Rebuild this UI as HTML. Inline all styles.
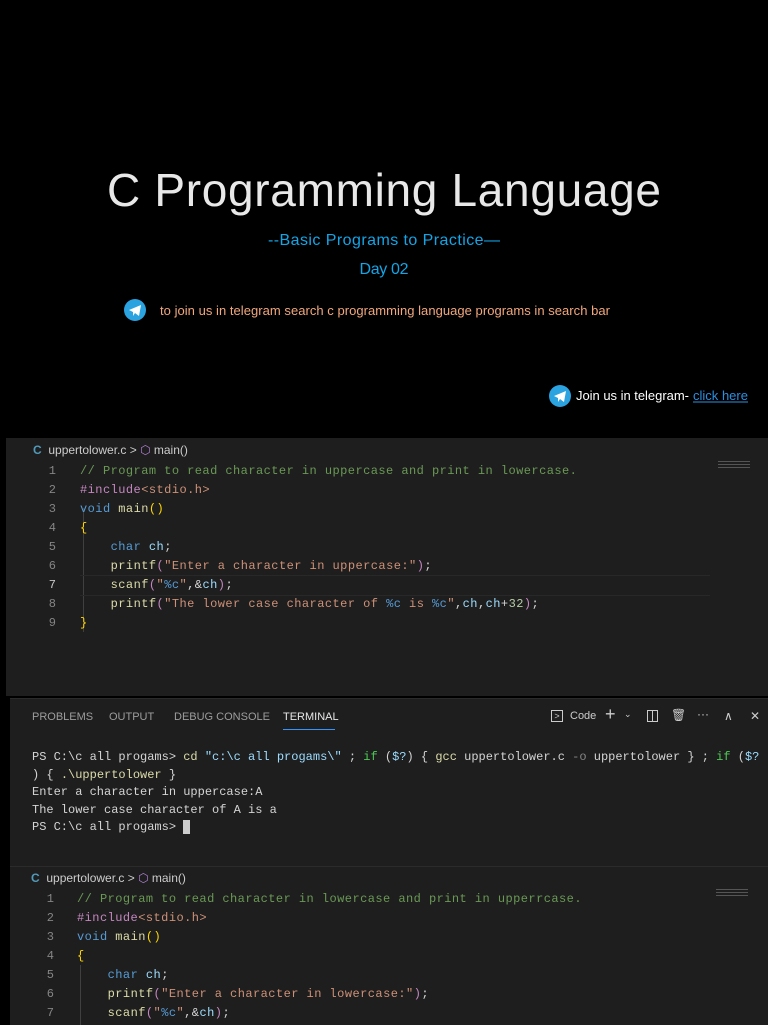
<!DOCTYPE html>
<html><head><meta charset="utf-8"><style>
body{margin:0;width:768px;height:1024px;background:#000;overflow:hidden;position:relative;font-family:"Liberation Sans",sans-serif}
.p{position:absolute;background:#1e1e1e}
.m{font-family:"Liberation Mono",monospace;font-size:12px;white-space:pre;position:absolute;color:#d4d4d4;letter-spacing:0.45px}
.n{color:#858585}
.c{color:#6a9955}.k{color:#569cd6}.f{color:#dcdcaa}.s{color:#ce9178}.v{color:#9cdcfe}.i{color:#c586c0}.y{color:#ffd700}.nu{color:#b5cea8}
.bc{position:absolute;font-size:12px;color:#ccc}
.ic{position:absolute;top:708px;color:#ccc;font-size:12px}
</style></head><body>
<svg width="768" height="430" style="position:absolute;left:0;top:0">
<text x="384" y="206" text-anchor="middle" fill="#e8e8e8" font-size="46" textLength="554" font-family="Liberation Sans">C Programming Language</text>
<text x="384" y="245" text-anchor="middle" fill="#12a6e8" font-size="16" textLength="232">--Basic Programs to Practice—</text>
<text x="384" y="274" text-anchor="middle" fill="#12a6e8" font-size="16" textLength="49">Day 02</text>
<circle cx="135" cy="310" r="11" fill="#2aa3e0"/>
<path d="M129 310 L141 305 L139 316 L135 313 L133 316 L133 312 Z" fill="#fff"/>
<text x="160" y="315" fill="#f2a77c" font-size="13" textLength="450">to join us in telegram search c programming language programs in search bar</text>
<circle cx="560" cy="396" r="11" fill="#2aa3e0"/>
<path d="M554 396 L566 391 L564 402 L560 399 L558 402 L558 398 Z" fill="#fff"/>
<text x="576" y="400" fill="#fff" font-size="13" textLength="113">Join us in telegram-</text>
<text x="693" y="400" fill="#2d8fe0" font-size="13" textLength="55">click here</text>
<line x1="693" y1="402" x2="748" y2="402" stroke="#2d8fe0"/>
</svg>

<div class="p" style="left:6px;top:438px;width:762px;height:258px"></div>
<div class="bc" style="left:33px;top:443px"><b style="color:#519aba">C</b>&nbsp; uppertolower.c &gt; <span style="color:#b180d7">⬡</span> main()</div>
<div style="position:absolute;left:83px;top:508px;width:1px;height:124px;background:#404040"></div>
<div style="position:absolute;left:80px;top:575px;width:630px;height:19px;border-top:1px solid #282828;border-bottom:1px solid #282828"></div>
<div class="m n" style="left:42px;top:462px;line-height:19px;text-align:right;width:14px;letter-spacing:0">1
2
3
4
5
6
<span style="color:#c6c6c6">7</span>
8
9</div>
<div class="m" style="left:80px;top:462px;line-height:19px"><span class="c">// Program to read character in uppercase and print in lowercase.</span>
<span class="i">#include</span><span class="s">&lt;stdio.h&gt;</span>
<span class="k">void</span> <span class="f">main</span><span class="y">()</span>
<span class="y">{</span>
    <span class="k">char</span> <span class="v">ch</span>;
    <span class="f">printf</span><span class="i">(</span><span class="s">"Enter a character in uppercase:"</span><span class="i">)</span>;
    <span class="f">scanf</span><span class="i">(</span><span class="s">"</span><span class="k">%c</span><span class="s">"</span>,&amp;<span class="v">ch</span><span class="i">)</span>;
    <span class="f">printf</span><span class="i">(</span><span class="s">"The lower case character of </span><span class="k">%c</span><span class="s"> is </span><span class="k">%c</span><span class="s">"</span>,<span class="v">ch</span>,<span class="v">ch</span>+<span class="nu">32</span><span class="i">)</span>;
<span class="y">}</span></div>
<div style="position:absolute;left:718px;top:461px;width:32px;height:8px;background:repeating-linear-gradient(#555 0 1px,transparent 1px 3px)"></div>

<div class="p" style="left:10px;top:698px;width:758px;height:167px;border-top:1px solid #2b2b2b"></div>
<div class="bc" style="left:32px;top:711px;font-size:11px;color:#9d9d9d">PROBLEMS</div>
<div class="bc" style="left:109px;top:711px;font-size:11px;color:#9d9d9d">OUTPUT</div>
<div class="bc" style="left:174px;top:711px;font-size:11px;color:#9d9d9d">DEBUG CONSOLE</div>
<div class="bc" style="left:283px;top:711px;font-size:11px;color:#e7e7e7">TERMINAL</div>
<div style="position:absolute;left:283px;top:729px;width:52px;height:1px;background:#3794ff"></div>
<div style="position:absolute;left:551px;top:710px;width:12px;height:12px;border:1px solid #ccc;box-sizing:border-box;font-size:9px;color:#ccc;text-align:center;line-height:10px">&gt;</div>
<div class="ic" style="left:570px;top:710px;font-size:11px">Code</div>
<div class="ic" style="left:605px;top:704px;font-size:18px">+</div>
<div class="ic" style="left:624px;top:709px;font-size:9px">⌄</div>
<div style="position:absolute;left:647px;top:710px;width:11px;height:12px;border:1px solid #ccc;box-sizing:border-box"><div style="margin-left:4px;width:1px;height:10px;background:#ccc"></div></div>
<div class="ic" style="left:671px;top:708px">🗑</div>
<div class="ic" style="left:697px;top:707px">···</div>
<div class="ic" style="left:724px;top:709px">∧</div>
<div class="ic" style="left:750px;top:709px">✕</div>
<div class="m" style="left:32px;top:749px;line-height:17.5px;font-size:12px;letter-spacing:0">PS C:\c all progams&gt; <span class="f">cd</span> <span class="v">"c:\c all progams\"</span> ; <span style="color:#4ec955">if</span> (<span class="v">$?</span>) { <span class="f">gcc</span> uppertolower.c <span class="n">-o</span> uppertolower } ; <span style="color:#4ec955">if</span> (<span class="v">$?</span>
) { <span class="f">.\uppertolower</span> }
Enter a character in uppercase:A
The lower case character of A is a
PS C:\c all progams&gt; <span style="background:#ccc"> </span></div>

<div class="p" style="left:10px;top:866px;width:758px;height:158px;border-top:1px solid #2b2b2b"></div>
<div class="bc" style="left:31px;top:871px"><b style="color:#519aba">C</b>&nbsp; uppertolower.c &gt; <span style="color:#b180d7">⬡</span> main()</div>
<div style="position:absolute;left:80px;top:965px;width:1px;height:60px;background:#404040"></div>
<div class="m n" style="left:40px;top:890px;line-height:19px;text-align:right;width:14px;letter-spacing:0">1
2
3
4
5
6
7</div>
<div class="m" style="left:77px;top:890px;line-height:19px"><span class="c">// Program to read character in lowercase and print in upperrcase.</span>
<span class="i">#include</span><span class="s">&lt;stdio.h&gt;</span>
<span class="k">void</span> <span class="f">main</span><span class="y">()</span>
<span class="y">{</span>
    <span class="k">char</span> <span class="v">ch</span>;
    <span class="f">printf</span><span class="i">(</span><span class="s">"Enter a character in lowercase:"</span><span class="i">)</span>;
    <span class="f">scanf</span><span class="i">(</span><span class="s">"</span><span class="k">%c</span><span class="s">"</span>,&amp;<span class="v">ch</span><span class="i">)</span>;</div>
<div style="position:absolute;left:716px;top:889px;width:32px;height:8px;background:repeating-linear-gradient(#555 0 1px,transparent 1px 3px)"></div>
</body></html>
